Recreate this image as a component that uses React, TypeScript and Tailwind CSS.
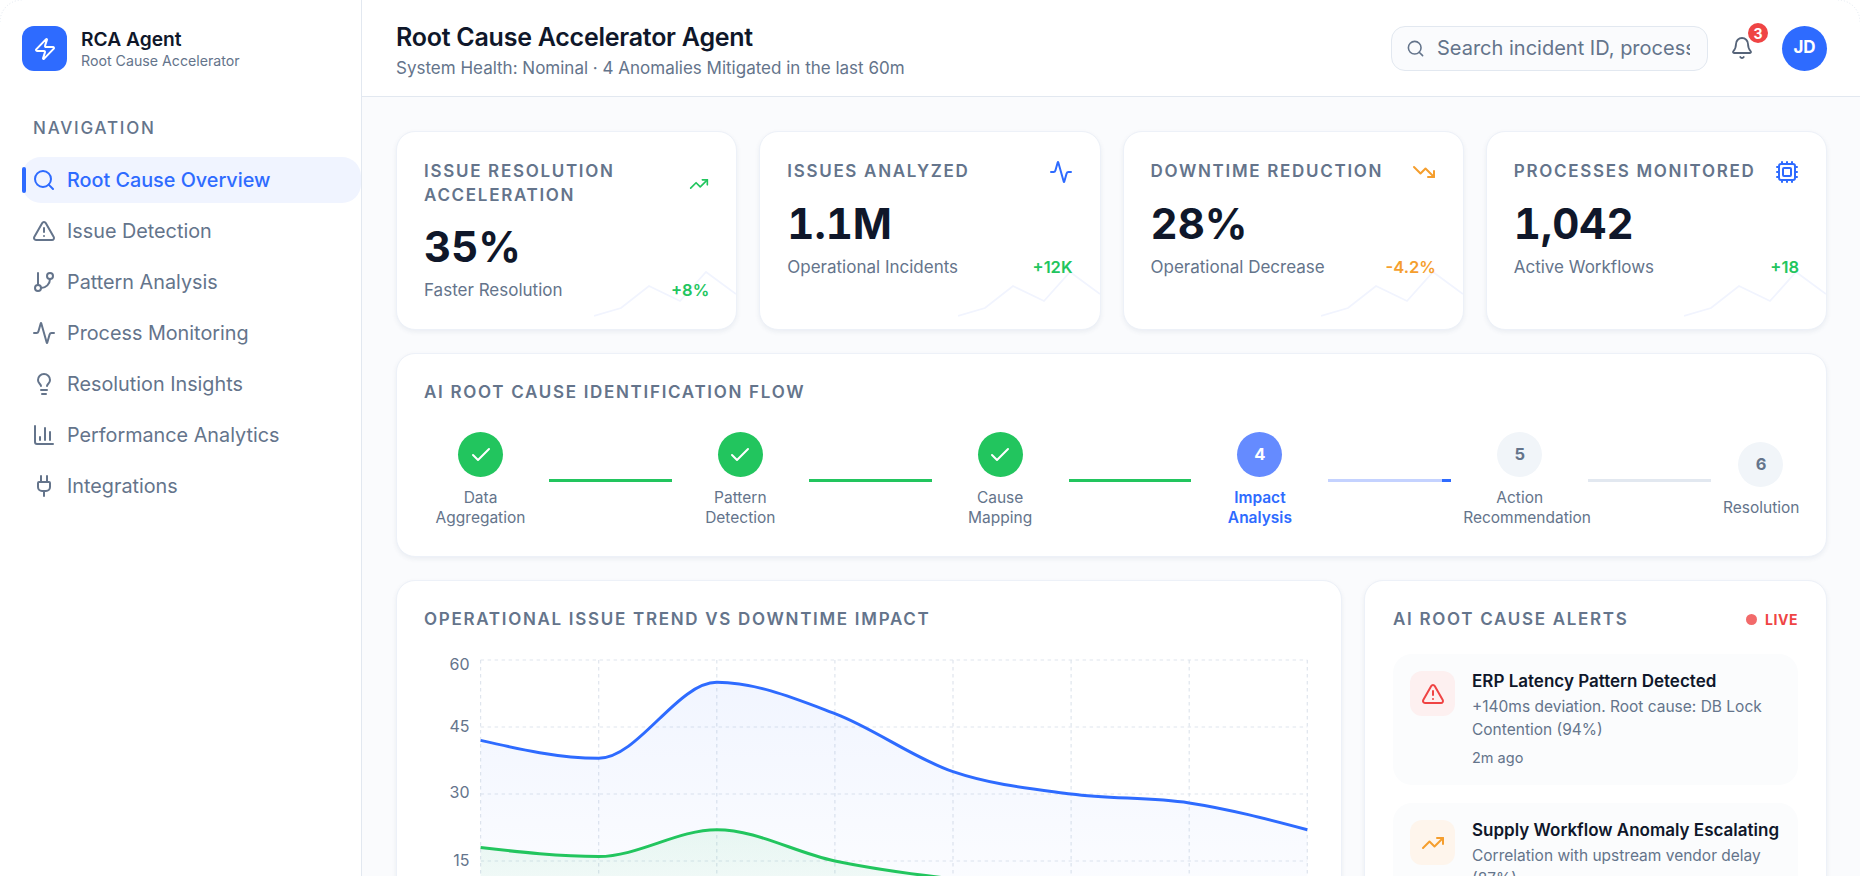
import React from 'react';
import {
  Zap,
  Search,
  TriangleAlert,
  GitBranch,
  Activity,
  Lightbulb,
  ChartColumn,
  Plug,
  Bell,
  TrendingUp,
  TrendingDown,
  Cpu,
  Check,
} from 'lucide-react';

const navItems = [
  { label: 'Root Cause Overview', icon: Search, active: true },
  { label: 'Issue Detection', icon: TriangleAlert },
  { label: 'Pattern Analysis', icon: GitBranch },
  { label: 'Process Monitoring', icon: Activity },
  { label: 'Resolution Insights', icon: Lightbulb },
  { label: 'Performance Analytics', icon: ChartColumn },
  { label: 'Integrations', icon: Plug },
];

const kpis = [
  { label: 'Issue Resolution Acceleration', value: '35%', sub: 'Faster Resolution', delta: '+8%', deltaCls: 'text-[#22c55e]', icon: TrendingUp, iconCls: 'text-[#22c55e]', iconSize: 20 },
  { label: 'Issues Analyzed', value: '1.1M', sub: 'Operational Incidents', delta: '+12K', deltaCls: 'text-[#22c55e]', icon: Activity, iconCls: 'text-[#2e6bff]', iconSize: 24 },
  { label: 'Downtime Reduction', value: '28%', sub: 'Operational Decrease', delta: '-4.2%', deltaCls: 'text-[#f59e2e]', icon: TrendingDown, iconCls: 'text-[#f59e2e]', iconSize: 24 },
  { label: 'Processes Monitored', value: '1,042', sub: 'Active Workflows', delta: '+18', deltaCls: 'text-[#22c55e]', icon: Cpu, iconCls: 'text-[#2e6bff]', iconSize: 24 },
];

const steps = [
  { n: 1, lines: ['Data', 'Aggregation'], state: 'done' },
  { n: 2, lines: ['Pattern', 'Detection'], state: 'done' },
  { n: 3, lines: ['Cause', 'Mapping'], state: 'done' },
  { n: 4, lines: ['Impact', 'Analysis'], state: 'active' },
  { n: 5, lines: ['Action', 'Recommendation'], state: 'todo' },
  { n: 6, lines: ['Resolution'], state: 'todo' },
];

const alerts = [
  {
    title: 'ERP Latency Pattern Detected',
    body: '+140ms deviation. Root cause: DB Lock Contention (94%)',
    time: '2m ago',
    icon: TriangleAlert,
    boxCls: 'bg-[#fdf0f0] text-[#ef4444]',
  },
  {
    title: 'Supply Workflow Anomaly Escalating',
    body: 'Correlation with upstream vendor delay (87%)',
    time: '9m ago',
    icon: TrendingUp,
    boxCls: 'bg-[#fef5ec] text-[#f59e2e]',
  },
];

// chart geometry, in px inside the svg
const X0 = 56.6;
const DX = 118.1;
const yOf = (v: number) => 298 - v * 4.467;
const issues = [42, 38, 55, 48, 35, 30, 28, 22];
const downtime = [18, 16, 22, 15, 11, 9, 8, 6];

// same tangents as d3's curveMonotoneX
function monotonePath(values: number[]) {
  const pts = values.map((v, i) => [X0 + i * DX, yOf(v)]);
  const slopes = pts.slice(1).map((p, i) => (p[1] - pts[i][1]) / DX);
  const t = pts.map((_, i) => {
    if (i === 0 || i === pts.length - 1) return 0;
    const a = slopes[i - 1];
    const b = slopes[i];
    if (a * b <= 0) return 0;
    const sign = a > 0 ? 1 : -1;
    return 2 * sign * Math.min(Math.abs(a), Math.abs(b), 0.25 * Math.abs(a + b));
  });
  t[0] = (3 * slopes[0] - t[1]) / 2;
  t[pts.length - 1] = (3 * slopes[pts.length - 2] - t[pts.length - 2]) / 2;
  let d = `M${pts[0][0]},${pts[0][1]}`;
  for (let i = 1; i < pts.length; i++) {
    const h = DX / 3;
    d += `C${pts[i - 1][0] + h},${pts[i - 1][1] + t[i - 1] * h},${pts[i][0] - h},${pts[i][1] - t[i] * h},${pts[i][0]},${pts[i][1]}`;
  }
  return d;
}

const areaClose = ` L${X0 + 7 * DX},${yOf(0)} L${X0},${yOf(0)} Z`;

const TrendChart = () => {
  const issuesPath = monotonePath(issues);
  const downtimePath = monotonePath(downtime);
  return (
    <svg width="890" height="310" viewBox="0 0 890 310" className="block">
      <defs>
        <linearGradient id="issuesFill" x1="0" y1="0" x2="0" y2="1">
          <stop offset="0%" stopColor="#2e6bff" stopOpacity="0.065" />
          <stop offset="100%" stopColor="#2e6bff" stopOpacity="0.01" />
        </linearGradient>
        <linearGradient id="downtimeFill" x1="0" y1="0" x2="0" y2="1">
          <stop offset="0%" stopColor="#22c55e" stopOpacity="0.08" />
          <stop offset="100%" stopColor="#22c55e" stopOpacity="0.02" />
        </linearGradient>
      </defs>
      {[60, 45, 30, 15, 0].map(v => (
        <line key={v} x1={X0} x2={X0 + 7 * DX} y1={yOf(v)} y2={yOf(v)} stroke="#dfe5ed" strokeWidth="1.2" strokeDasharray="3.5 3.5" />
      ))}
      {issues.map((_, i) => (
        <line key={i} x1={X0 + i * DX} x2={X0 + i * DX} y1={yOf(60)} y2={yOf(0)} stroke="#dfe5ed" strokeWidth="1.2" strokeDasharray="3.5 3.5" />
      ))}
      <path d={issuesPath + areaClose} fill="url(#issuesFill)" />
      <path d={downtimePath + areaClose} fill="url(#downtimeFill)" />
      <path d={issuesPath} fill="none" stroke="#2e6bff" strokeWidth="3" />
      <path d={downtimePath} fill="none" stroke="#22c55e" strokeWidth="3" />
      {[
        { t: '60', y: 34 },
        { t: '45', y: 96 },
        { t: '30', y: 162.5 },
        { t: '15', y: 230.5 },
      ].map(l => (
        <text key={l.t} x="45.5" y={l.y + 5.5} textAnchor="end" fontSize="16" fill="#64748b">
          {l.t}
        </text>
      ))}
    </svg>
  );
};

const Sparkline = () => (
  <svg width="142" height="60" viewBox="0 0 142 60" className="absolute right-0 bottom-[4px]" fill="none">
    <path d="M0 51 L27 43 L55 21 L86 36 L112 7 L142 29" stroke="#f1f4fe" strokeWidth="1.8" />
  </svg>
);

const App: React.FC = () => {
  return (
    <div className="relative flex h-screen overflow-hidden bg-[#fafbfd] text-[#0f172a] font-['Inter','Noto_Sans',sans-serif]">
      {/* Sidebar */}
      <aside className="w-[362px] shrink-0 h-full bg-white border-r border-[#e2e8f0]">
        <div className="flex items-center gap-[14px] pl-[22px] pt-[26px]">
          <div className="w-[45px] h-[45px] rounded-[12px] bg-[#2e6bff] flex items-center justify-center">
            <Zap size={24} className="text-white" strokeWidth={2} />
          </div>
          <div>
            <div className="text-[19.2px] leading-[24px] font-semibold text-[#0f172a]">RCA Agent</div>
            <div className="text-[14.2px] leading-[20px] text-[#64748b]">Root Cause Accelerator</div>
          </div>
        </div>
        <div className="pl-[33px] mt-[46px] text-[17px] leading-[22px] font-medium tracking-[0.105em] text-[#64748b]">NAVIGATION</div>
        <nav className="mt-[18px] pl-[22px] flex flex-col gap-[5px]">
          {navItems.map(item => {
            const Icon = item.icon;
            return (
              <div
                key={item.label}
                className={`relative h-[46px] flex items-center gap-[11px] pl-[10px] rounded-[19px] text-[19.8px] ${
                  item.active ? 'bg-[#f0f4ff] text-[#2e6bff] font-medium' : 'text-[#64748b]'
                }`}
              >
                {item.active && <span className="absolute left-0 top-[10px] bottom-[10px] w-[4px] rounded-full bg-[#2e6bff]" />}
                <Icon size={24} />
                <span className="pt-[1px]">{item.label}</span>
              </div>
            );
          })}
        </nav>
      </aside>

      {/* Main */}
      <div className="flex-1 min-w-0 flex flex-col h-full">
        <header className="h-[97px] shrink-0 bg-white border-b border-[#e2e8f0] flex items-center justify-between pl-[34px] pr-[33px]">
          <div className="pt-[4px]">
            <h1 className="text-[25px] leading-[32px] font-semibold tracking-[-0.01em] text-[#0f172a]">Root Cause Accelerator Agent</h1>
            <p className="mt-[3px] text-[17px] leading-[24px] text-[#64748b]">System Health: Nominal · 4 Anomalies Mitigated in the last 60m</p>
          </div>
          <div className="flex items-center">
            <div className="w-[317px] h-[45px] rounded-[14px] border border-[#e2e8f0] bg-[#fafbfd] flex items-center pl-[14px] pr-[17px] gap-[12px]">
              <Search size={19} className="text-[#64748b] shrink-0" />
              <input
                readOnly
                placeholder="Search incident ID, process..."
                className="flex-1 min-w-0 bg-transparent outline-none text-[20px] placeholder:text-[#64748b]"
              />
            </div>
            <div className="relative ml-[22px] w-[24px] h-[24px]">
              <Bell size={24} className="text-[#566479]" strokeWidth={1.8} />
              <span className="absolute -top-[13px] left-[18px] w-[20px] h-[20px] rounded-full bg-[#ef4444] text-white text-[14px] font-bold flex items-center justify-center">3</span>
            </div>
            <div className="ml-[28px] w-[45px] h-[45px] rounded-full bg-[#2e6bff] text-white text-[17px] font-bold flex items-center justify-center">JD</div>
          </div>
        </header>

        <main className="flex-1 min-h-0 overflow-hidden pl-[34px] pr-[33px] pt-[34px] flex flex-col gap-[23px]">
          {/* KPI cards */}
          <div className="grid grid-cols-4 gap-[22px] shrink-0">
            {kpis.map(k => {
              const Icon = k.icon;
              return (
                <div key={k.label} className="relative h-[199px] overflow-hidden rounded-[19px] bg-white border border-[#edf1f8] shadow-[0_2px_5px_rgba(30,50,100,0.07)] pt-[28px] px-[27px]">
                  <Sparkline />
                  <div className="relative flex items-center justify-between gap-2">
                    <div className="text-[17px] leading-[23.5px] font-semibold tracking-[0.1em] uppercase text-[#64748b]">{k.label}</div>
                    <Icon size={k.iconSize} className={`${k.iconCls} shrink-0`} />
                  </div>
                  <div className="relative mt-[14px] text-[42px] leading-[52px] font-bold tabular-nums text-[#0f172a]">{k.value}</div>
                  <div className="relative mt-[5px] flex items-center justify-between leading-[24px]">
                    <span className="text-[17px] text-[#64748b]">{k.sub}</span>
                    <span className={`${k.deltaCls} text-[16.5px] font-semibold`}>{k.delta}</span>
                  </div>
                </div>
              );
            })}
          </div>

          {/* Flow */}
          <section className="shrink-0 h-[204px] rounded-[19px] bg-white border border-[#edf1f8] shadow-[0_2px_5px_rgba(30,50,100,0.07)] pt-[27px] px-[27px]">
            <h2 className="text-[17px] leading-[22px] font-semibold tracking-[0.1em] uppercase text-[#64748b]">AI Root Cause Identification Flow</h2>
            <div className="mt-[29px] flex items-center">
              {steps.map((s, i) => (
                <React.Fragment key={s.n}>
                  <div className={`${i === 5 ? 'w-[76px]' : 'w-[113px]'} shrink-0 flex flex-col items-center gap-[11px]`}>
                    <div
                      className={`w-[45px] h-[45px] shrink-0 rounded-full flex items-center justify-center text-[16.5px] font-bold ${
                        s.state === 'done' ? 'bg-[#22c55e] text-white' : s.state === 'active' ? 'bg-[#658bff] text-white' : 'bg-[#f1f5f9] text-[#64748b]'
                      }`}
                    >
                      {s.state === 'done' ? <Check size={24} strokeWidth={2} /> : s.n}
                    </div>
                    <div className={`w-full text-[15.5px] leading-[20px] text-center ${s.state === 'active' ? 'text-[#2e6bff] font-semibold' : 'text-[#64748b]'}`}>
                      {s.lines.map(line => (
                        <div key={line} className={line === 'Recommendation' ? 'whitespace-nowrap text-left' : 'whitespace-nowrap'}>
                          {line}
                        </div>
                      ))}
                    </div>
                  </div>
                  {i < 5 && (
                    <div
                      className={`flex-1 mx-[12px] h-[3px] flex justify-end ${
                        s.state === 'done' ? 'bg-[#22c55e]' : s.state === 'active' ? 'bg-[#c4d2ff]' : 'bg-[#e2e8f0]'
                      }`}
                    >
                      {s.state === 'active' && <div className="w-[9px] h-full bg-[#2e6bff]" />}
                    </div>
                  )}
                </React.Fragment>
              ))}
            </div>
          </section>

          {/* Bottom row */}
          <div className="flex gap-[22px] items-start">
            <section className="w-[946px] shrink-0 h-[420px] rounded-[19px] bg-white border border-[#edf1f8] shadow-[0_2px_5px_rgba(30,50,100,0.07)] pt-[27px] px-[27px]">
              <h2 className="text-[17px] leading-[22px] font-semibold tracking-[0.1em] uppercase text-[#64748b]">Operational Issue Trend vs Downtime Impact</h2>
              <TrendChart />
            </section>

            <section className="flex-1 min-w-0 h-[420px] rounded-[19px] bg-white border border-[#edf1f8] shadow-[0_2px_5px_rgba(30,50,100,0.07)] pt-[27px] px-[28px]">
              <div className="flex items-center justify-between">
                <h2 className="text-[17px] leading-[22px] font-semibold tracking-[0.1em] uppercase text-[#64748b]">AI Root Cause Alerts</h2>
                <div className="flex items-center gap-[8px] text-[14px] font-bold tracking-[0.04em] text-[#ef4444]">
                  <span className="w-[11px] h-[11px] rounded-full bg-[#f26a6a]" />
                  LIVE
                </div>
              </div>
              <div className="mt-[24px] flex flex-col gap-[18px]">
                {alerts.map(a => {
                  const Icon = a.icon;
                  return (
                    <div key={a.title} className="flex gap-[17px] rounded-[19px] bg-[#fbfcfd] p-[17px]">
                      <div className={`w-[45px] h-[45px] shrink-0 rounded-[12px] flex items-center justify-center ${a.boxCls}`}>
                        <Icon size={24} />
                      </div>
                      <div className="min-w-0">
                        <div className="text-[17px] leading-[22px] font-semibold text-[#0f172a] whitespace-nowrap -mt-[1px]">{a.title}</div>
                        <div className="mt-[4px] text-[15.5px] leading-[22.5px] text-[#64748b]">{a.body}</div>
                        <div className="mt-[7px] text-[14.5px] leading-[20px] text-[#64748b]">{a.time}</div>
                      </div>
                    </div>
                  );
                })}
              </div>
            </section>
          </div>
        </main>
      </div>

      {/* faint corner arcs of the capture */}
      <svg width="24" height="24" viewBox="0 0 24 24" fill="none" className="absolute left-0 top-0">
        <path d="M0 22 A22 22 0 0 1 22 0" stroke="#e2e8f0" strokeDasharray="1 2" />
      </svg>
      <svg width="24" height="24" viewBox="0 0 24 24" fill="none" className="absolute right-0 top-0">
        <path d="M2 0 A22 22 0 0 1 24 22" stroke="#e2e8f0" strokeDasharray="1 2" />
      </svg>
    </div>
  );
};

export default App;
